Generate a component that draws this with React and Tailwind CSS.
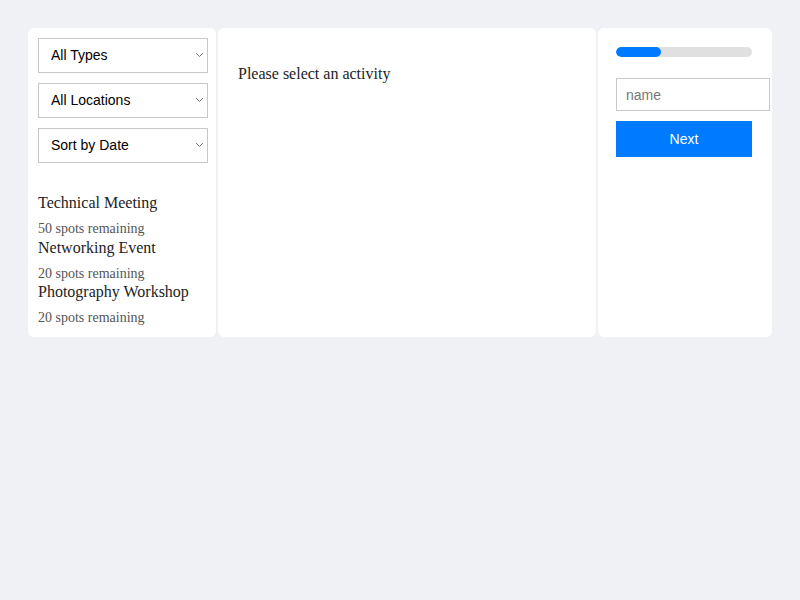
import { useState } from "react";

const activities = [
  { name: "Technical Meeting", spots: 50 },
  { name: "Networking Event", spots: 20 },
  { name: "Photography Workshop", spots: 20 },
];

function Select({ value, options, onChange }) {
  return (
    <div className="relative w-[170px] h-[35px]">
      <select
        value={value}
        onChange={(e) => onChange(e.target.value)}
        className="appearance-none w-full h-full border border-[#c8c8c8] bg-white pl-[12px] pr-6 text-[14px] text-black font-['Liberation_Sans',Arial,sans-serif] outline-none"
      >
        {options.map((o) => (
          <option key={o}>{o}</option>
        ))}
      </select>
      <svg
        className="absolute right-[4px] top-[14px] pointer-events-none"
        width="9"
        height="6"
        viewBox="0 0 9 6"
        fill="none"
      >
        <path d="M1 1l3.5 3.5L8 1" stroke="#777" strokeWidth="1" />
      </svg>
    </div>
  );
}

export default function App() {
  const [type, setType] = useState("All Types");
  const [location, setLocation] = useState("All Locations");
  const [sort, setSort] = useState("Sort by Date");
  const [name, setName] = useState("");

  return (
    <div className="min-h-[600px] bg-[#f0f1f5] p-[28px] font-['Liberation_Serif','Times_New_Roman',serif]">
      <div className="flex gap-[2px] w-[744px]">
        <div className="w-[188px] bg-white rounded-[6px] p-[10px]">
          <div className="flex flex-col gap-[10px]">
            <Select value={type} onChange={setType} options={["All Types", "Meeting", "Event", "Workshop"]} />
            <Select value={location} onChange={setLocation} options={["All Locations"]} />
            <Select value={sort} onChange={setSort} options={["Sort by Date", "Sort by Name"]} />
          </div>
          <div className="mt-[30px]">
            {activities.map((a) => (
              <div key={a.name} className="cursor-pointer">
                <div className="text-[16px] leading-[20px] text-[#222] mb-[7px]">{a.name}</div>
                <div className="text-[14px] leading-[17.5px] text-[#555]">{a.spots} spots remaining</div>
              </div>
            ))}
          </div>
        </div>

        <div className="w-[378px] bg-white rounded-[6px] p-[20px]">
          <p className="mt-[17px] text-[16px] leading-[18px] text-[#222]">Please select an activity</p>
        </div>

        <div className="w-[174px] bg-white rounded-[6px] px-[18px] pt-[19px]">
          <div className="w-[136px] h-[10px] rounded-full bg-[#e0e0e0] overflow-hidden">
            <div className="h-full w-[45px] rounded-full bg-[#007bff]" />
          </div>
          <input
            value={name}
            onChange={(e) => setName(e.target.value)}
            placeholder="name"
            className="mt-[21px] block w-[154px] h-[33px] border border-[#c8c8c8] px-[9px] text-[14px] font-['Liberation_Sans',Arial,sans-serif] placeholder:text-[#777] outline-none"
          />
          <button className="mt-[10px] block w-[136px] h-[36px] bg-[#007bff] text-white text-[14px] font-['Liberation_Sans',Arial,sans-serif]">
            Next
          </button>
        </div>
      </div>
    </div>
  );
}
